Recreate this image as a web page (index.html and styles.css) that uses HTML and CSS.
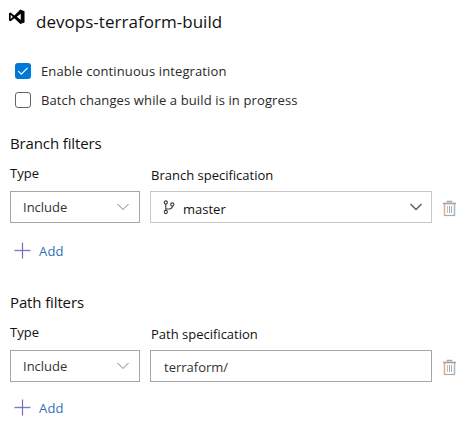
FILE: index.html
```
<!DOCTYPE html>
<html lang="en">
<head>
<meta charset="utf-8">
<title>devops-terraform-build</title>
<link rel="stylesheet" href="styles.css">
</head>
<body>
<svg class="sprite" aria-hidden="true">
  <symbol id="trash" viewBox="0 0 13 17">
    <path d="M4.500 2.500v-1h4v1" fill="none" stroke="#aaa" stroke-width="1.600"/>
    <path d="M0 3.500h13" stroke="#a8a29f" stroke-width="1.600"/>
    <path d="M1.500 4v11.500" stroke="#cdb5aa" stroke-width="1.600"/>
    <path d="M11.500 4v11.500" stroke="#a9b9d6" stroke-width="1.600"/>
    <path d="M1 15.500h11" stroke="#aaa" stroke-width="1.200"/>
    <path d="M4.500 6v7" stroke="#e0b890"/><path d="M6.500 6v7" stroke="#a9a9b4"/><path d="M8.500 6v7" stroke="#90bdb0"/>
  </symbol>
  <symbol id="plus" viewBox="0 0 17 17">
    <path d="M0.500 8.500h16" stroke="#7185c6" stroke-width="1.400"/><path d="M8.500 0.500v16" stroke="#8065c2" stroke-width="1.200"/>
  </symbol>
  <symbol id="chevron" viewBox="0 0 12 8">
    <path d="M0.500 1l5.500 5.500L11.500 1" fill="none" stroke="currentColor"/>
  </symbol>
</svg>
<main class="panel">
  <header class="title">
    <svg class="logo" viewBox="0 0 17 16"><path fill="#000" fill-rule="evenodd" d="M12 0l4.500 1.800v12L12 15.500 5.700 9.400 1.700 12.600 0 11.800V4l1.700-.8 4 3.100zM12.500 4.500L8.300 7.800l4.200 3.300zM1.800 5.700v4.500l2.300-2.300z"/></svg>
    <h1>devops-terraform-build</h1>
  </header>
  <div class="options">
    <label class="option"><span class="check checked"><svg viewBox="0 0 16 16"><path d="M3.300 8.200l3 3 6.300-6.300" fill="none" stroke="#fff" stroke-width="1.200"/></svg></span><span>Enable continuous integration</span></label>
    <label class="option"><span class="check"></span><span>Batch changes while a build is in progress</span></label>
  </div>
  <section class="filters">
    <h2>Branch filters</h2>
    <div class="fields">
      <div class="field">
        <span class="label">Type</span>
        <div class="box select"><span>Include</span><svg class="chevron"><use href="#chevron"/></svg></div>
      </div>
      <div class="field wide">
        <span class="label low">Branch specification</span>
        <div class="box branch">
          <svg class="fork" viewBox="0 0 12 15"><g fill="none" stroke="#3c3c44" stroke-width="1.100"><circle cx="2.800" cy="2.500" r="1.600"/><circle cx="9.300" cy="4.500" r="1.600"/><circle cx="2.800" cy="12" r="1.600"/><path d="M2.800 4.100v6.300M9.300 6.100c0 2.200-1.200 2.900-3 2.900H2.800"/></g></svg>
          <span>master</span><svg class="chevron"><use href="#chevron"/></svg>
        </div>
      </div>
      <svg class="trash"><use href="#trash"/></svg>
    </div>
    <a class="add"><svg class="plus"><use href="#plus"/></svg><span>Add</span></a>
  </section>
  <section class="filters path">
    <h2>Path filters</h2>
    <div class="fields">
      <div class="field">
        <span class="label">Type</span>
        <div class="box select"><span>Include</span><svg class="chevron"><use href="#chevron"/></svg></div>
      </div>
      <div class="field wide">
        <span class="label low">Path specification</span>
        <div class="box input"><span>terraform/</span></div>
      </div>
      <svg class="trash"><use href="#trash"/></svg>
    </div>
    <a class="add"><svg class="plus"><use href="#plus"/></svg><span>Add</span></a>
  </section>
</main>
</body>
</html>
```
FILE: styles.css
```
* { box-sizing: border-box; }
body {
  margin: 0;
  background: #fff;
  color: #111;
  font: 13px/20px "Open Sans", "Noto Sans", sans-serif;
}
svg { display: block; flex: none; }
.sprite { position: absolute; width: 0; height: 0; }
.panel { width: 465px; height: 424px; padding: 9px 9px 0 10px; overflow: hidden; white-space: nowrap; }
h1, h2 { margin: 0; font-weight: 400; }
.title { display: flex; height: 54px; gap: 11px; }
.logo { width: 16px; height: 16px; margin-left: -1px; }
h1 { font-size: 17px; line-height: 26px; letter-spacing: 0.03px; }
.options { display: flex; flex-direction: column; gap: 13px; padding-left: 5px; height: 69px; }
.option { display: flex; align-items: center; gap: 10px; height: 16px; color: #292929; letter-spacing: 0.12px; }
.check { width: 16px; height: 16px; border: 1px solid #666; border-radius: 3px; }
.checked { background: #0078d7; border: 0; }
h2 { font-size: 15px; line-height: 22px; height: 31px; letter-spacing: -0.13px; }
.filters { height: 159px; }
.fields { display: flex; gap: 10px; height: 60px; }
.field { width: 130px; }
.wide { width: 282px; }
.label { display: block; height: 28px; line-height: 20px; }
.low { padding: 2px 0 0 1px; }
.box { display: flex; align-items: center; height: 32px; border: 1px solid #a6a6a6; padding: 0 10px 0 12px; color: #333; }
.chevron { width: 12px; height: 8px; margin-left: auto; color: #8a7c7c; }
.branch { border-color: #c8c8c8; padding: 4px 9px 0 12px; color: #111; }
.branch .chevron { color: #765844; margin-top: -5px; stroke-width: 1.5; }
.fork { width: 12px; height: 15px; margin-right: 8px; margin-top: -3px; }
.trash { width: 13px; height: 17px; margin-top: 37px; margin-left: 1px; }
.add { display: flex; align-items: center; gap: 8px; height: 17px; margin-top: 19px; padding-left: 4px; color: #2b70bd; letter-spacing: 0.2px; }
.plus { width: 17px; height: 17px; }
.path .add { margin-top: 17px; }
.input { padding: 1px 10px 0 13px; }
```
